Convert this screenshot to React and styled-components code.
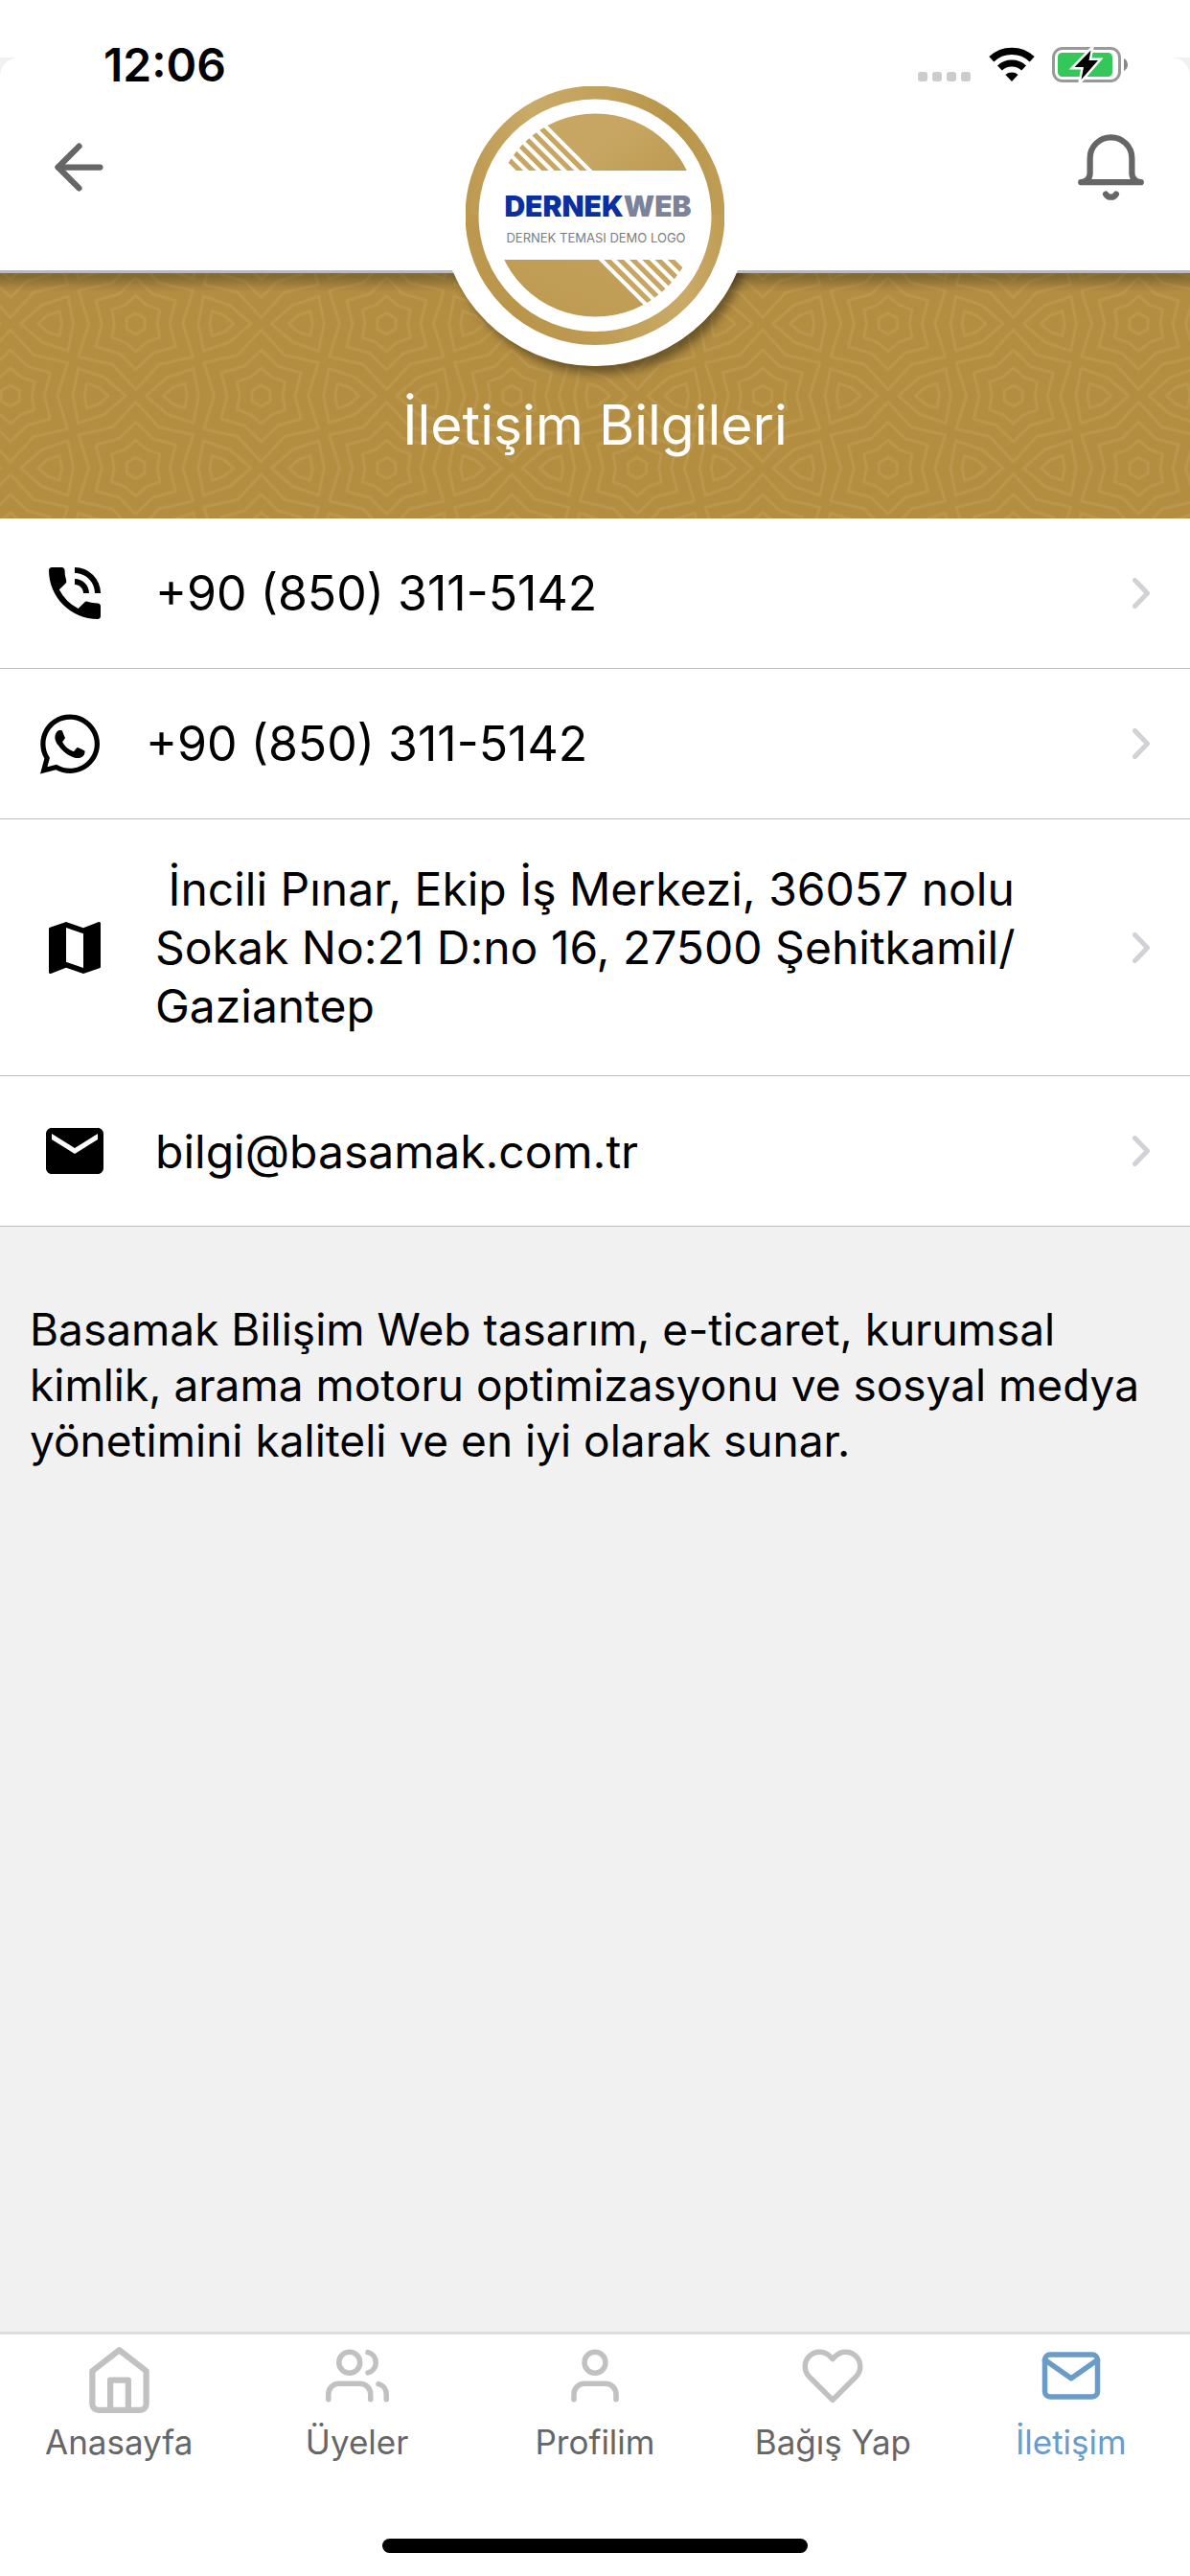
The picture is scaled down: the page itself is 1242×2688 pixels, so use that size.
import React from 'react';
import styled, { createGlobalStyle } from 'styled-components';
import { MdPhoneInTalk, MdMap, MdEmail } from 'react-icons/md';
import { FaWhatsapp } from 'react-icons/fa';
import { FiArrowLeft, FiHome, FiUsers, FiUser, FiHeart, FiMail } from 'react-icons/fi';

const GlobalStyle = createGlobalStyle`
  *, *::before, *::after { box-sizing: border-box; }
  body {
    margin: 0;
    background: #f1f1f1;
    color: #000;
    font-family: Inter, "Liberation Sans", sans-serif;
  }
  h1, p, ul { margin: 0; padding: 0; }
  ul { list-style: none; }
  svg { display: block; flex: none; }
`;

const Screen = styled.div`
  position: relative;
  display: flex;
  flex-direction: column;
  min-height: 100vh;
`;

/* ---------- status bar ---------- */

const StatusBar = styled.div`
  position: absolute;
  z-index: 2;
  top: 0;
  left: 0;
  right: 0;
  display: flex;
  align-items: center;
  justify-content: space-between;
  height: 136px;
  padding: 0 64px 0 108px;
`;

const Clock = styled.time`
  font-size: 48px;
  line-height: 58px;
  font-weight: 600;
`;

const StatusIcons = styled.div`
  display: flex;
  align-items: center;
  gap: 18px;
`;

const SignalDots = () => (
  <svg width="56" height="38" viewBox="0 0 56 38" fill="#ccc" aria-hidden="true">
    {[0, 15, 30, 45].map((x) => (
      <rect key={x} x={x} y="26" width="10" height="10" rx="3" />
    ))}
  </svg>
);

const WifiIcon = () => (
  <svg width="48" height="38" viewBox="0 0 48 38" fill="none" stroke="#000" aria-hidden="true">
    <path d="M2.800 12.800a31 31 0 0 1 42.400 0" strokeWidth="7.400" />
    <path d="M11.400 22a18.600 18.600 0 0 1 25.200 0" strokeWidth="7" />
    <path d="M17.400 29a10 10 0 0 1 13.200 0L24 36z" fill="#000" stroke="none" />
  </svg>
);

const BatteryIcon = () => (
  <svg width="80" height="38" viewBox="0 0 80 38" aria-hidden="true">
    <rect x="1.500" y="1.500" width="69" height="34" rx="9.500" fill="none" stroke="#999" strokeWidth="3" />
    <path d="M75 12c5.300 2.400 5.300 10.600 0 13z" fill="#888" />
    <rect x="6" y="6" width="57" height="25" rx="4.500" fill="#34c759" />
    <path
      d="M40.500 3.500L23.500 21H33L30.500 34L48 14H38.500z"
      fill="#000"
      stroke="#fff"
      strokeWidth="5"
      paintOrder="stroke"
    />
  </svg>
);

/* ---------- header ---------- */

const Header = styled.header`
  position: relative;
  z-index: 1;
  padding-top: 60px;
  background: linear-gradient(#fff 60px, transparent 60px);
`;

const Toolbar = styled.div`
  position: relative;
  display: flex;
  align-items: center;
  justify-content: space-between;
  height: 225px;
  padding: 7px 45px 0;
  background: #fff;
  border-bottom: 3px solid #bababc;
  border-radius: 20px 20px 0 0;
`;

const IconButton = styled.button`
  display: flex;
  padding: 0;
  border: 0;
  background: none;
  color: #666;
`;

const LogoShade = styled.div`
  position: absolute;
  top: 60px;
  left: 50%;
  width: 322px;
  height: 322px;
  margin-left: -161px;
  border-radius: 50%;
  box-shadow: 6px 10px 10px -2px rgba(0, 0, 0, 0.4);
`;

const LogoDisc = styled.div`
  position: absolute;
  top: 60px;
  left: 50%;
  display: flex;
  justify-content: center;
  width: 322px;
  height: 322px;
  margin-left: -161px;
  padding-top: 30px;
  border-radius: 50%;
  background: #fff;
`;

const BellIcon = () => (
  <svg
    width="75"
    height="75"
    viewBox="0 0 24 24"
    fill="none"
    stroke="currentColor"
    strokeWidth="2"
    strokeLinecap="round"
    strokeLinejoin="round"
    aria-hidden="true"
  >
    <path d="M22 17H2a3 3 0 0 0 3-3V9a7 7 0 0 1 14 0v5a3 3 0 0 0 3 3zm-8.270 4a2 2 0 0 1-3.460 0" />
  </svg>
);

const stripeOffsets = [0, 13.3, 26.6, 39.9, 53.2, 66.5];

const Logo = () => (
  <svg width="270" height="270" viewBox="0 0 270 270" role="img" aria-label="Dernekweb">
    <defs>
      <linearGradient id="ringTop" gradientUnits="userSpaceOnUse" x1="0" y1="0" x2="270" y2="0">
        <stop offset="0" stopColor="#bd9950" />
        <stop offset="0.25" stopColor="#c9aa67" />
        <stop offset="0.55" stopColor="#c1a05a" />
        <stop offset="0.8" stopColor="#b9954a" />
        <stop offset="1" stopColor="#c09d55" />
      </linearGradient>
      <linearGradient id="ringLow" gradientUnits="userSpaceOnUse" x1="0" y1="0" x2="270" y2="0">
        <stop offset="0" stopColor="#bd9950" />
        <stop offset="0.2" stopColor="#b9954a" />
        <stop offset="0.5" stopColor="#be9b53" />
        <stop offset="0.85" stopColor="#c9aa67" />
        <stop offset="1" stopColor="#c09d55" />
      </linearGradient>
      <linearGradient id="capTop" x1="0" y1="0" x2="1" y2="0.5">
        <stop offset="0" stopColor="#c7a863" />
        <stop offset="0.6" stopColor="#c6a662" />
        <stop offset="1" stopColor="#bf9c55" />
      </linearGradient>
      <linearGradient id="capLow" x1="0" y1="1" x2="1" y2="0">
        <stop offset="0" stopColor="#b9954a" />
        <stop offset="1" stopColor="#c5a25c" />
      </linearGradient>
      <clipPath id="upper"><rect width="270" height="88" /></clipPath>
      <clipPath id="lower"><rect y="181" width="270" height="89" /></clipPath>
      <clipPath id="disc"><circle cx="135.500" cy="134.500" r="106" /></clipPath>
    </defs>
    <path d="M6.500 135a128.500 128.500 0 0 1 257 0" fill="none" stroke="url(#ringTop)" strokeWidth="14" />
    <path d="M6.500 134.500a128.500 128.500 0 0 0 257 0" fill="none" stroke="url(#ringLow)" strokeWidth="14" />
    <g clipPath="url(#upper)">
      <g clipPath="url(#disc)">
        <path d="M66.500 22L132.500 88H260V0H66z" fill="url(#capTop)" />
        {stripeOffsets.map((x) => (
          <path key={x} d={`M${127 - x} 92L${27 - x} -8`} stroke="#c6a660" strokeWidth="5.200" />
        ))}
      </g>
    </g>
    <g clipPath="url(#lower)">
      <g clipPath="url(#disc)">
        <path d="M138.500 181L204.500 247V270H0V181z" fill="url(#capLow)" />
        {stripeOffsets.map((x) => (
          <path key={x} d={`M${144 + x} 177L${244 + x} 277`} stroke="#c6a660" strokeWidth="5.200" />
        ))}
      </g>
    </g>
    <text x="138" y="136" textAnchor="middle" fontFamily="Inter, sans-serif" fontSize="30" fontWeight="900">
      <tspan fill="#0a2fa0">DERNEK</tspan>
      <tspan fill="#7b8299">WEB</tspan>
    </text>
    <text x="136" y="163" textAnchor="middle" fontFamily="Inter, sans-serif" fontSize="13" fontWeight="400" fill="#7c7c7c">
      DERNEK TEMASI DEMO LOGO
    </text>
  </svg>
);

/* ---------- banner ---------- */

const Banner = styled.section`
  position: relative;
  display: flex;
  align-items: flex-end;
  justify-content: center;
  height: 256px;
  padding-bottom: 59px;
  background: #b38e41;
  overflow: hidden;

  &::after {
    content: '';
    position: absolute;
    inset: 0 0 auto;
    height: 20px;
    background: linear-gradient(rgba(0, 0, 0, 0.25) 20%, rgba(0, 0, 0, 0.08) 70%, transparent);
  }
`;

const Texture = styled.svg`
  position: absolute;
  inset: 0;
`;

const BannerTitle = styled.h1`
  position: relative;
  font-size: 57px;
  line-height: 76px;
  font-weight: 400;
  color: #fff;
`;

const TILE_W = 261.7;
const TILE_H = 150.7;

const starPoints = (cx, cy, tip, valley) =>
  Array.from({ length: 12 }, (_, i) => {
    const angle = (Math.PI / 6) * i - Math.PI / 2;
    const r = i % 2 ? valley : tip;
    return `${cx + r * Math.cos(angle)},${cy + r * Math.sin(angle)}`;
  }).join(' ');

const petalPoints = (cx, cy, tip, bulge, dir) =>
  Array.from({ length: 6 }, (_, i) => {
    const angle = (Math.PI / 3) * i;
    const r = i % 2 ? bulge : tip;
    return `${cx + dir * r * Math.cos(angle)},${cy + r * Math.sin(angle)}`;
  }).join(' ');

const stars = [[0, 0], [TILE_W, 0], [0, TILE_H], [TILE_W, TILE_H], [TILE_W / 2, TILE_H / 2]];
const third = TILE_W / 6;
const petals = [
  [third, TILE_H / 2, -1],
  [TILE_W - third, TILE_H / 2, 1],
  [TILE_W / 2 - third, 0, 1],
  [TILE_W / 2 - third, TILE_H, 1],
  [TILE_W / 2 + third, 0, -1],
  [TILE_W / 2 + third, TILE_H, -1],
];

const StarTexture = () => (
  <Texture width="100%" height="100%" aria-hidden="true">
    <defs>
      <pattern
        id="stars"
        width={TILE_W}
        height={TILE_H}
        patternUnits="userSpaceOnUse"
        patternTransform="translate(141.700 52.700)"
      >
        <g fill="none" stroke="#bb974e" strokeWidth="2.800" strokeLinejoin="round">
          {stars.map(([x, y]) => (
            <g key={`${x}-${y}`}>
              <polygon points={starPoints(x, y, 11, 9.5)} />
              <polygon points={starPoints(x, y, 29, 22.5)} />
              <polygon points={starPoints(x, y, 48, 35.5)} />
              <polygon points={starPoints(x, y, 69, 49)} />
            </g>
          ))}
          {petals.map(([x, y, dir]) => (
            <g key={`${x}-${y}`}>
              <polygon points={petalPoints(x, y, 33, 22, dir)} />
              <polygon points={petalPoints(x, y, 15, 10, dir)} />
            </g>
          ))}
        </g>
      </pattern>
    </defs>
    <rect width="100%" height="100%" fill="url(#stars)" />
  </Texture>
);

/* ---------- contact list ---------- */

const ContactList = styled.ul`
  background: #fff;
`;

const ContactLink = styled.a`
  display: flex;
  align-items: center;
  gap: 48px;
  padding: 42px;
  border-bottom: 1px solid #bcbbc1;
  color: #000;
  font-size: ${(p) => (p.$number ? '50px' : '48px')};
  line-height: 61px;
  text-decoration: none;
`;

const ContactIcon = styled.span`
  display: flex;
  align-items: center;
  height: 72px;
`;

const WhatsappGlyph = styled(FaWhatsapp)`
  width: 62px;
  height: 71px;
`;

const ContactText = styled.span`
  flex: 1;
`;

const Chevron = () => (
  <svg width="18" height="32" viewBox="0 0 18 32" fill="none" stroke="#d1d1d6" aria-hidden="true">
    <path d="M2.500 2.500L15.500 16L2.500 29.500" strokeWidth="5" strokeLinecap="round" strokeLinejoin="round" />
  </svg>
);

const contacts = [
  { id: 'phone', href: 'tel:+908503115142', icon: <MdPhoneInTalk size={72} />, text: '+90 (850) 311-5142', number: true },
  { id: 'whatsapp', href: '#whatsapp', icon: <WhatsappGlyph />, text: '+90 (850) 311-5142', number: true },
  {
    id: 'address',
    href: '#harita',
    icon: <MdMap size={72} />,
    text: (
      <>
        {'\u00a0'}İncili Pınar, Ekip İş Merkezi, 36057 nolu Sokak No:21 D:no 16, 27500 Şehitkamil/
        <wbr />
        Gaziantep
      </>
    ),
  },
  { id: 'email', href: 'mailto:bilgi@basamak.com.tr', icon: <MdEmail size={72} />, text: 'bilgi@basamak.com.tr' },
];

/* ---------- body and tabs ---------- */

const Main = styled.main`
  flex: 1;
`;

const About = styled.p`
  padding: 78px 31px;
  font-size: 46px;
  line-height: 58px;
`;

const TabBar = styled.nav`
  display: flex;
  flex-direction: column;
  align-items: center;
  justify-content: space-between;
  height: 255px;
  padding-bottom: 24px;
  background: #fff;
  border-top: 3px solid #ddd;
`;

const Tabs = styled.div`
  display: grid;
  grid-template-columns: repeat(5, 1fr);
  width: 100%;
  padding-top: 10px;
`;

const Tab = styled.a`
  display: flex;
  flex-direction: column;
  align-items: center;
  color: ${(p) => (p.$active ? '#6b9bc7' : '#666')};
  font-size: 35px;
  line-height: 44px;
  text-decoration: none;
`;

const TabIcon = styled.span`
  height: 80px;
  color: ${(p) => (p.$active ? '#6b9bc7' : '#c1c1c1')};
`;

const HomeIndicator = styled.div`
  width: 444px;
  height: 15px;
  border-radius: 8px;
  background: #000;
`;

const tabs = [
  { label: 'Anasayfa', Icon: FiHome, size: 75 },
  { label: 'Üyeler', Icon: FiUsers, size: 66 },
  { label: 'Profilim', Icon: FiUser, size: 66 },
  { label: 'Bağış Yap', Icon: FiHeart, size: 66 },
  { label: 'İletişim', Icon: FiMail, size: 66, active: true },
];

export default function App() {
  return (
    <Screen lang="tr">
      <GlobalStyle />
      <StatusBar>
        <Clock>12:06</Clock>
        <StatusIcons>
          <SignalDots />
          <WifiIcon />
          <BatteryIcon />
        </StatusIcons>
      </StatusBar>
      <Header>
        <LogoShade />
        <Toolbar>
          <IconButton type="button" aria-label="Geri">
            <FiArrowLeft size={75} />
          </IconButton>
          <IconButton type="button" aria-label="Bildirimler">
            <BellIcon />
          </IconButton>
        </Toolbar>
        <LogoDisc>
          <Logo />
        </LogoDisc>
      </Header>
      <Banner>
        <StarTexture />
        <BannerTitle>İletişim Bilgileri</BannerTitle>
      </Banner>
      <Main>
        <ContactList>
          {contacts.map((c) => (
            <li key={c.id}>
              <ContactLink href={c.href} $number={c.number}>
                <ContactIcon>{c.icon}</ContactIcon>
                <ContactText>{c.text}</ContactText>
                <Chevron />
              </ContactLink>
            </li>
          ))}
        </ContactList>
        <About>
          Basamak Bilişim Web tasarım, e-ticaret, kurumsal kimlik, arama motoru optimizasyonu ve sosyal medya
          yönetimini kaliteli ve en iyi olarak sunar.
        </About>
      </Main>
      <TabBar>
        <Tabs>
          {tabs.map(({ label, Icon, size, active }) => (
            <Tab key={label} href="#" $active={active} aria-current={active ? 'page' : undefined}>
              <TabIcon $active={active}>
                <Icon size={size} />
              </TabIcon>
              {label}
            </Tab>
          ))}
        </Tabs>
        <HomeIndicator />
      </TabBar>
    </Screen>
  );
}
